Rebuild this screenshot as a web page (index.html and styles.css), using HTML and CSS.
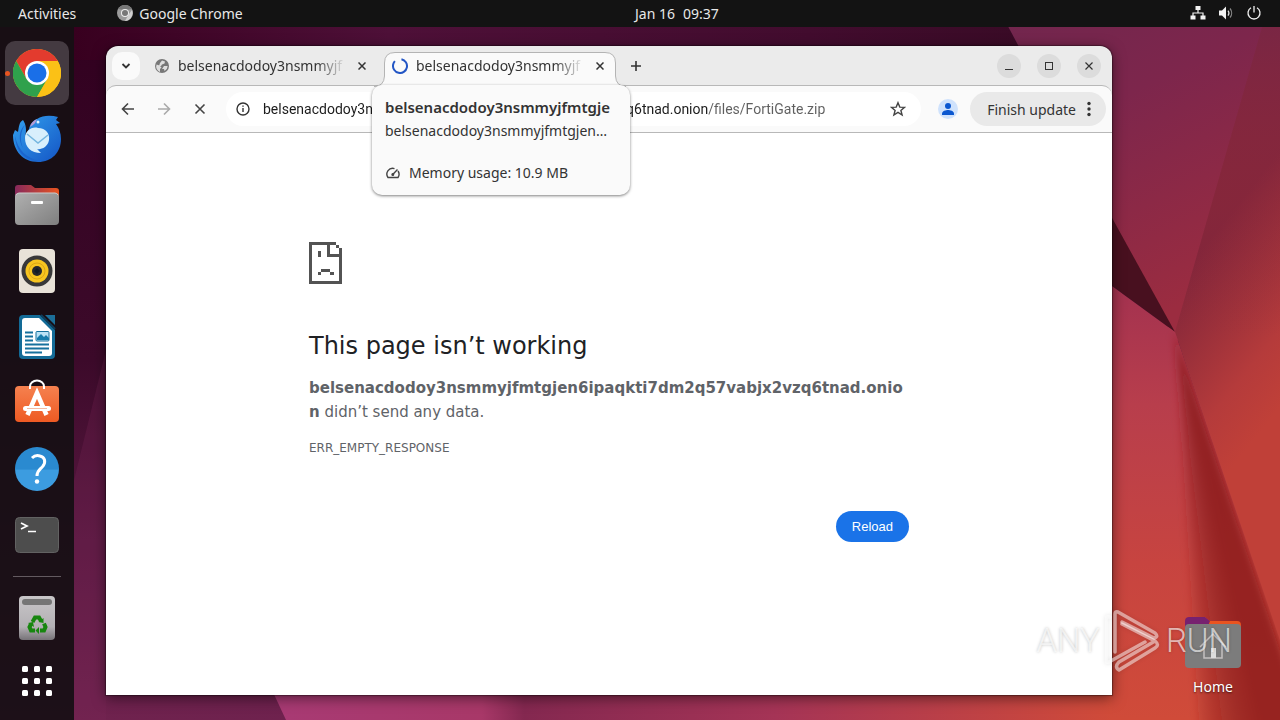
FILE: index.html
```html
<!DOCTYPE html>
<html lang="en">
<head>
<meta charset="utf-8">
<title>Desktop</title>
<link rel="stylesheet" href="styles.css">
</head>
<body>
<svg class="wallpaper" viewBox="0 0 1280 720" preserveAspectRatio="none" aria-hidden="true">
  <defs>
    <linearGradient id="left" x1="0" y1="0" x2="0" y2="1"><stop offset="0" stop-color="#31001f"/><stop offset=".5" stop-color="#3c0a2a"/><stop offset=".75" stop-color="#581840"/><stop offset="1" stop-color="#6f224e"/></linearGradient>
    <linearGradient id="top" x1="0" y1="0" x2="1" y2="0"><stop offset="0" stop-color="#38001f"/><stop offset=".3" stop-color="#4e1038"/><stop offset=".7" stop-color="#420c2e"/><stop offset="1" stop-color="#350a22"/></linearGradient>
    <linearGradient id="upper" x1="0" y1="0" x2=".4" y2="1"><stop offset="0" stop-color="#6f264e"/><stop offset=".4" stop-color="#7d264c"/><stop offset="1" stop-color="#9b2c40"/></linearGradient>
    <linearGradient id="east" gradientUnits="userSpaceOnUse" x1="1185" y1="270" x2="1310" y2="370"><stop offset="0" stop-color="#80253a"/><stop offset=".7" stop-color="#b53b3b"/><stop offset="1" stop-color="#c04038"/></linearGradient>
    <linearGradient id="fall" x1="0" y1="0" x2="0" y2="1"><stop offset="0" stop-color="#6f264e" stop-opacity=".6"/><stop offset=".6" stop-color="#9a2c3e" stop-opacity=".2"/><stop offset="1" stop-color="#9a2c3e" stop-opacity="0"/></linearGradient>
    <linearGradient id="south" x1="0" y1="0" x2="0" y2="1"><stop offset="0" stop-color="#a03050"/><stop offset=".3" stop-color="#b83e4c"/><stop offset=".65" stop-color="#c74440"/><stop offset="1" stop-color="#d04b39"/></linearGradient>
    <linearGradient id="floor" x1="0" y1="0" x2="1" y2="0"><stop offset="0" stop-color="#a83a74"/><stop offset=".25" stop-color="#a83868"/><stop offset=".3" stop-color="#842850"/><stop offset=".6" stop-color="#a53456"/><stop offset="1" stop-color="#d04b39"/></linearGradient>
    <filter id="soft" x="-20%" y="-5%" width="140%" height="110%"><feGaussianBlur stdDeviation="4"/></filter>
    <clipPath id="southclip"><path d="M1175 332L1090 270V720H1280V640z"/></clipPath>
  </defs>
  <rect width="1280" height="720" fill="url(#left)"/>
  <rect x="74" width="1050" height="60" fill="url(#top)"/>
  <path d="M74 480 L106 350 V720 H74z" fill="#7c2858" opacity=".25"/>
  <path d="M994 0H1280V340H1175z" fill="url(#upper)"/>
  <path d="M1270 0H1280V645L1175 332z" fill="url(#east)"/>
  <path d="M1270 0H1280V340L1175 332z" fill="url(#fall)"/>
  <path d="M1175 332L1100 196V277z" fill="#48101f"/>
  <path d="M1175 332L1090 270V720H1280V640z" fill="url(#south)"/>
  <g clip-path="url(#southclip)">
    <g fill="#8a1d1c" fill-opacity=".24" filter="url(#soft)">
      <path d="M1175 332L1200 740H1310V732z"/>
      <path d="M1175 332L1212 740H1310V732z"/>
      <path d="M1175 332L1224 740H1310V732z"/>
      <path d="M1175 332L1236 740H1310V732z"/>
      <path d="M1175 332L1248 740H1310V732z"/>
      <path d="M1175 332L1260 740H1310V732z"/>
    </g>
  </g>
  <path d="M272 690H1112V720H286z" fill="url(#floor)"/>
</svg>

<header class="topbar">
  <div class="topbar-left">
    <button class="top-item">Activities</button>
    <button class="top-item app-menu">
      <svg width="16" height="16" viewBox="0 0 16 16"><circle cx="8" cy="8" r="8" fill="#9b9b9b"/><path d="M1 4A8 8 0 0 1 15 4L8 5z" fill="#777"/><path d="M15 5a8 8 0 0 1-7 11l4-7z" fill="#d0d0d0"/><circle cx="8" cy="8" r="4" fill="#eee"/><circle cx="8" cy="8" r="3" fill="#777"/></svg>
      Google Chrome</button>
  </div>
  <button class="top-item clock"><span>Jan 16</span><span>09:37</span></button>
  <div class="status">
    <svg width="16" height="16" viewBox="0 0 16 16" fill="#f2f2f2"><path d="M5.500 1h5v4h-5zM.5 10.500h5v4h-5zM10.500 10.500h5v4h-5z"/><path d="M8 5v3M3 11V8h10v3" fill="none" stroke="#f2f2f2" stroke-width="1.200"/></svg>
    <svg width="16" height="16" viewBox="0 0 16 16"><path d="M1 5.500h3L8 1.500v13l-4-4H1z" fill="#f2f2f2"/><path d="M10 5.500a4 4 0 0 1 0 5" fill="none" stroke="#ddd" stroke-width="1.200"/><path d="M12 3.500a7 7 0 0 1 0 9" fill="none" stroke="#888" stroke-width="1.200"/></svg>
    <svg width="16" height="16" viewBox="0 0 16 16" fill="none" stroke="#f2f2f2" stroke-width="1.300"><path d="M8 1v6.500M5 2.800a6 6 0 1 0 6 0"/></svg>
  </div>
</header>

<div class="workspace">
  <nav class="dock" aria-label="Dock">
    <button class="dock-item running" aria-label="Google Chrome">
      <svg width="48" height="48" viewBox="0 0 48 48"><circle cx="24" cy="24" r="24" fill="#fbbc15"/><path d="M3.200 12A24 24 0 0 1 44.800 12H24L13.600 30z" fill="#e33b2e"/><path d="M3.200 12A24 24 0 0 0 24 48L34.400 30 13.600 30z" fill="#2fa14c"/><path d="M24 12H44.800A24 24 0 0 1 24 48L34.400 30z" fill="#fbc116"/><circle cx="24" cy="24" r="12" fill="#fff"/><circle cx="24" cy="24" r="9.500" fill="#1a6fe8"/></svg>
    </button>
    <button class="dock-item" aria-label="Thunderbird">
      <svg width="48" height="48" viewBox="0 0 48 48"><defs><linearGradient id="tb" x1="0" y1="0" x2="1" y2="1"><stop offset="0" stop-color="#33a2ef"/><stop offset="1" stop-color="#1454c4"/></linearGradient></defs><path d="M0 20C0 36 10 47 25 47C39 47 48 37 48 24C48 18 46 13 43 9L47 8L43 5L45 2C38 0 30 0 24 4C19 6 17 10 16 14L12 21C14 16 13 9 10 5C6 7 6 12 5 17L2 15z" fill="url(#tb)"/><path d="M2 21c3 14 11 22 25 25-16 0-24-10-25-25zM12 10c-5 7-5 16-2 23-5-8-4-18 2-23z" fill="#1b65cd"/><path d="M17 12c1-4 3-6 7-8-1 3-3 6-7 8z" fill="#b79bd3"/><circle cx="25" cy="7" r="1.500" fill="#dff3ff"/><path d="M12 23c0-7 7-12 13-10 8 0 12 6 11 12-1 7-8 10-12 9l4 4c-10 0-16-6-16-15z" fill="#d8effc"/><path d="M14 19l11 9 10-8" fill="none" stroke="#75b6df" stroke-width="1.500"/></svg>
    </button>
    <button class="dock-item" aria-label="Files">
      <svg width="48" height="48" viewBox="0 0 48 48"><defs><linearGradient id="ff" x1="0" x2="1"><stop offset="0" stop-color="#87295c"/><stop offset="1" stop-color="#e95420"/></linearGradient><linearGradient id="fg" x1="0" y1="0" x2="1" y2="1"><stop offset="0" stop-color="#b0b0b0"/><stop offset="1" stop-color="#7f7f7f"/></linearGradient></defs><path d="M2 12V7q0-3 3-3h13l4 3h21q3 0 3 3v6H2z" fill="url(#ff)"/><rect x="2" y="12" width="44" height="32" rx="4" fill="url(#fg)"/><path d="M3 14q1-2 3-2h36q2 0 3 2" stroke="#ccc" fill="none"/><rect x="18" y="20" width="12" height="3" rx="1" fill="#fff"/></svg>
    </button>
    <button class="dock-item" aria-label="Rhythmbox">
      <svg width="48" height="48" viewBox="0 0 48 48"><rect x="6" y="2" width="36" height="44" rx="4" fill="#e8e2d8"/><circle cx="24" cy="24" r="15.500" fill="#383839"/><circle cx="24" cy="24" r="11.500" fill="#f7c51f"/><circle cx="24" cy="24" r="8" fill="none" stroke="#dba717" stroke-width="1"/><circle cx="24" cy="24" r="5" fill="#26282b"/><path d="M21 24l3-3 3 3-3 3z" fill="#111a26"/></svg>
    </button>
    <button class="dock-item" aria-label="LibreOffice Writer">
      <svg width="48" height="48" viewBox="0 0 48 48"><path d="M6 6q0-4 4-4h17l15 15v25q0 4-4 4H10q-4 0-4-4z" fill="#136b97"/><path d="M9 8q0-3 3-3h14l13 13v22q0 3-3 3H12q-3 0-3-3z" fill="#fff"/><path d="M32 2h10v10z" fill="#1c6e98"/><path d="M28 2l14 14" stroke="#0c3e5c" stroke-width="2"/><path d="M12 19.500h8M12 23.500h8M12 27.500h8M12 31.500h24M12 35.500h24M12 39.500h17" stroke="#16719d" stroke-width="2"/><rect x="23" y="18.500" width="13" height="9.500" rx="1" fill="#b9e2f6" stroke="#16719d"/><path d="M24 27v-2l4-4 3 3 2-2 3 3v2z" fill="#167cac"/></svg>
    </button>
    <button class="dock-item" aria-label="Ubuntu Software">
      <svg width="48" height="48" viewBox="0 0 48 48"><defs><linearGradient id="us" x1="0" y1="0" x2="0" y2="1"><stop offset="0" stop-color="#f5814f"/><stop offset="1" stop-color="#ee5a23"/></linearGradient></defs><rect x="2" y="7" width="44" height="36" rx="4" fill="url(#us)"/><path d="M17 10V7.500a7 6 0 0 1 14 0V10" fill="none" stroke="#fff" stroke-width="2"/><path d="M14.500 36L24 14l9.500 22" fill="none" stroke="#fff" stroke-width="4.500"/><rect x="10" y="27" width="28" height="5" rx="2.500" fill="#fff"/><path d="M14 29.500h20" stroke="#f2a98a" stroke-width=".8"/></svg>
    </button>
    <button class="dock-item" aria-label="Help">
      <svg width="48" height="48" viewBox="0 0 48 48"><defs><linearGradient id="hp" x1="0" y1="0" x2="0" y2="1"><stop offset=".5" stop-color="#2a8ad0"/><stop offset=".53" stop-color="#3c9ce0"/></linearGradient></defs><circle cx="24" cy="24" r="22" fill="url(#hp)"/><path d="M19 13c2-2 5-3 8-2 5 1 6 6 3 10-2 3-6 4-6 10" fill="none" stroke="#fff" stroke-width="3"/><circle cx="24" cy="36.500" r="2.200" fill="#fff"/></svg>
    </button>
    <button class="dock-item" aria-label="Terminal">
      <svg width="48" height="48" viewBox="0 0 48 48"><rect x="2.500" y="6.500" width="43" height="35" rx="4" fill="#4d4d4d" stroke="#626262"/><path d="M8 12l6 3-6 3M15 20.500h8" fill="none" stroke="#fff" stroke-width="1.700"/></svg>
    </button>
    <hr class="dock-rule">
    <button class="dock-item" aria-label="Trash">
      <svg width="48" height="48" viewBox="0 0 48 48"><defs><linearGradient id="tr" x1="0" y1="0" x2="0" y2="1"><stop offset="0" stop-color="#c8c6c8"/><stop offset=".7" stop-color="#b3b0b4"/><stop offset="1" stop-color="#777378"/></linearGradient></defs><rect x="6" y="2" width="36" height="44" rx="4" fill="url(#tr)"/><rect x="9" y="5" width="30" height="6" rx="3" fill="#757575"/><g fill="none" stroke="#17860f" stroke-width="4"><path d="M19.500 28l2.500-4.500h4l2 3.500"/><path d="M31 29.500l1.500 3.500-1.500 3.500h-4" /><path d="M22 36.500h-4l-1.500-3.500 1.500-3"/></g><path d="M30.500 29l-5-1 5-4zM26 33v7l-3.500-3.500zM15 29l5-1 1 5z" fill="#17860f"/></svg>
    </button>
    <button class="dock-item apps" aria-label="Show Applications">
      <svg width="30" height="30" viewBox="0 0 30 30" fill="#fff"><rect width="6" height="6" rx="1.500"/><rect x="12" width="6" height="6" rx="1.500"/><rect x="24" width="6" height="6" rx="1.500"/><rect y="12" width="6" height="6" rx="1.500"/><rect x="12" y="12" width="6" height="6" rx="1.500"/><rect x="24" y="12" width="6" height="6" rx="1.500"/><rect y="24" width="6" height="6" rx="1.500"/><rect x="12" y="24" width="6" height="6" rx="1.500"/><rect x="24" y="24" width="6" height="6" rx="1.500"/></svg>
    </button>
  </nav>

  <main class="desktop">
    <a class="home" href="#home">
      <svg width="56" height="52" viewBox="0 0 56 52"><path d="M0 12V5q0-4 4-4h16l5 4H52q4 0 4 4v6H0z" fill="#e95420"/><path d="M0 12V5q0-4 4-4h16l5 4-2 5z" fill="#77216f"/><rect y="8" width="56" height="44" rx="4" fill="#7c7c7c"/><path d="M15 31L28 18l13 13M19 28v14h18V28" fill="none" stroke="#c4c0c0" stroke-width="1.500"/><rect x="26" y="32" width="5" height="10" fill="#ddd"/></svg>
      Home
    </a>

    <section class="window" aria-label="Google Chrome">
      <div class="tabstrip">
        <button class="tab-search" aria-label="Search tabs"><svg width="10" height="10" viewBox="0 0 10 10"><path d="M1.500 3L5 6.500 8.500 3" fill="none" stroke="#333" stroke-width="1.800"/></svg></button>
        <div class="tab">
          <svg width="16" height="16" viewBox="0 0 16 16"><circle cx="8" cy="8" r="7" fill="#777"/><path d="M2.500 6.500l3 1 2 2-1.500 1.500v3A6 6 0 0 1 2.500 6.500zM8 2.500l3 1-.5 2L8 6.500 7 8H5l1-3zM10 8h3.700a6 6 0 0 1-3.200 5l-.5-2H8z" fill="#ddd"/></svg>
          <span class="tab-title">belsenacdodoy3nsmmyjf</span>
          <button class="tab-close" aria-label="Close tab"><svg width="8" height="8" viewBox="0 0 8 8"><path d="M.5 .5l7 7M7.500 .5l-7 7" stroke="#333" stroke-width="1.500"/></svg></button>
        </div>
        <div class="tab active">
          <svg class="tab-shape" width="252" height="35" viewBox="0 0 252 35"><path d="M0 34.500Q10 34.500 10.500 24V11Q10.500 .5 21 .5H231Q241.500 .5 241.500 11V24Q242 34.500 252 34.500V35H0z" fill="#fafafa"/><path d="M0 34.500Q10 34.500 10.500 24V11Q10.500 .5 21 .5H231Q241.500 .5 241.500 11V24Q242 34.500 252 34.500" fill="none" stroke="#b4b4b4"/></svg>
          <svg width="16" height="16" viewBox="0 0 16 16"><path d="M8 1A7 7 0 1 1 1 8q0-2 1-3.700" transform="rotate(12 8 8)" fill="none" stroke="#2356c5" stroke-width="2"/></svg>
          <span class="tab-title">belsenacdodoy3nsmmyjf</span>
          <button class="tab-close" aria-label="Close tab"><svg width="8" height="8" viewBox="0 0 8 8"><path d="M.5 .5l7 7M7.500 .5l-7 7" stroke="#333" stroke-width="1.500"/></svg></button>
          <aside class="hovercard">
            <strong class="card-title">belsenacdodoy3nsmmyjfmtgje</strong>
            <span class="card-host">belsenacdodoy3nsmmyjfmtgjen…</span>
            <span class="card-memory"><svg width="16" height="16" viewBox="0 0 16 16" fill="none" stroke="#444" stroke-width="1.400"><path d="M9.500 3.600A5.800 5.800 0 0 0 3 12.500H13A5.800 5.800 0 0 0 13 6M7.500 9.700L12.500 4.500"/><circle cx="7.800" cy="9.500" r=".8" fill="#444"/></svg>Memory usage: 10.9 MB</span>
          </aside>
        </div>
        <button class="new-tab" aria-label="New tab"><svg width="12" height="12" viewBox="0 0 12 12"><path d="M6 1v10M1 6h10" stroke="#333" stroke-width="1.600"/></svg></button>
        <div class="window-controls">
          <button aria-label="Minimize"><svg width="10" height="10" viewBox="0 0 10 10"><path d="M1 8.500h8" stroke="#333"/></svg></button>
          <button aria-label="Maximize"><svg width="10" height="10" viewBox="0 0 10 10"><rect x="1.500" y="1.500" width="7" height="7" fill="none" stroke="#333"/></svg></button>
          <button aria-label="Close"><svg width="10" height="10" viewBox="0 0 10 10"><path d="M1.500 1.500l7 7M8.500 1.500l-7 7" stroke="#333" stroke-width="1.200"/></svg></button>
        </div>
      </div>

      <div class="toolbar">
        <button class="tool" aria-label="Back"><svg width="16" height="16" viewBox="0 0 16 16" fill="none" stroke="#444" stroke-width="1.600"><path d="M14 8H3M8 2.500L2.500 8 8 13.500"/></svg></button>
        <button class="tool" aria-label="Forward" disabled><svg width="16" height="16" viewBox="0 0 16 16" fill="none" stroke="#aaa" stroke-width="1.600"><path d="M2 8h11M8 2.500L13.500 8 8 13.500"/></svg></button>
        <button class="tool" aria-label="Stop"><svg width="16" height="16" viewBox="0 0 16 16" fill="none" stroke="#444" stroke-width="1.600"><path d="M3.500 3.500l9 9M12.500 3.500l-9 9"/></svg></button>
        <div class="omnibox">
          <svg width="16" height="16" viewBox="0 0 16 16" fill="none" stroke="#333" stroke-width="1.400"><circle cx="8" cy="8" r="6"/><path d="M8 7v4M8 4.500v1.300"/></svg>
          <input class="url" type="text" aria-label="Address" value="belsenacdodoy3nsmmyjfmtgjen6ipaqkti7dm2q57vabjx2vzq6tnad.onion/files/FortiGate.zip">
          <button class="star" aria-label="Bookmark this tab"><svg width="16" height="16" viewBox="0 0 16 16"><path d="M8 1.700l1.800 4.400 4.700.3-3.600 3 1.200 4.600L8 11.400 3.900 14l1.200-4.600-3.600-3 4.700-.3z" fill="none" stroke="#444" stroke-width="1.400"/></svg></button>
        </div>
        <button class="profile" aria-label="Profile"><svg width="20" height="20" viewBox="0 0 20 20"><circle cx="10" cy="10" r="10" fill="#cfe2fc"/><circle cx="10" cy="7" r="3" fill="#0b57d0"/><path d="M4 16v-1.500c0-2.500 4-3.500 6-3.500s6 1 6 3.500V16z" fill="#0b57d0"/></svg></button>
        <button class="update">Finish update<svg width="4" height="16" viewBox="0 0 4 16" fill="#333"><circle cx="2" cy="2.500" r="1.700"/><circle cx="2" cy="8" r="1.700"/><circle cx="2" cy="13.500" r="1.700"/></svg></button>
      </div>

      <article class="page">
        <div class="error">
          <svg width="33" height="42" viewBox="0 0 33 42" fill="#535353" shape-rendering="crispEdges"><path d="M0 0h27v3H3v36h27V15H18V3h3v9h9V6h3v36H0zM27 3h3v3h-3zM9 9h3v6H9zM12 27h9v3h-9zM9 30h3v3H9zM21 30h4v3h-4z"/></svg>
          <h1>This page isn’t working</h1>
          <p class="message"><strong>belsenacdodoy3nsmmyjfmtgjen6ipaqkti7dm2q57vabjx2vzq6tnad.onion</strong> didn’t send any data.</p>
          <p class="code">ERR_EMPTY_RESPONSE</p>
          <button class="reload">Reload</button>
        </div>
      </article>
    </section>

    <div class="watermark">
      <span>ANY</span>
      <svg width="56" height="62" viewBox="0 0 56 62" fill="none" stroke="#fff" stroke-opacity=".5" stroke-width="3.500" stroke-linejoin="round" stroke-linecap="round"><path d="M5 7Q1 6 1 10V50Q1 53 4 52L40 32"/><path d="M10 42V4Q10 1 13 2L50 23Q54 27 49 28L17 12"/><path d="M50 31L14 52Q9 57 14 60L50 38Q55 35 50 31L17 14"/></svg>
      <span>RUN</span>
    </div>
  </main>
</div>
</body>
</html>
```
FILE: styles.css
```css
* { box-sizing: border-box; }

body {
  margin: 0;
  height: 100vh;
  display: flex;
  flex-direction: column;
  overflow: hidden;
  background: #31001f;
  color: #333;
  font-family: "Noto Sans", "Open Sans", sans-serif;
  font-size: 14px;
}

button {
  margin: 0;
  padding: 0;
  border: 0;
  background: none;
  color: inherit;
  font: inherit;
  display: flex;
  align-items: center;
  justify-content: center;
}

svg { display: block; flex: none; }

.wallpaper {
  position: absolute;
  inset: 0;
  width: 100%;
  height: 100%;
  z-index: -1;
}

/* Top bar */
.topbar {
  display: grid;
  grid-template-columns: calc(50% - 5px) auto 1fr;
  align-items: center;
  height: 27px;
  padding-bottom: 1px;
  background: #131313;
  color: #e8e8e8;
}
.topbar-left { display: flex; gap: 41px; padding-left: 18px; }
.app-menu { gap: 6px; }
.clock { gap: 8px; }
.status { display: flex; justify-content: flex-end; gap: 12px; padding-right: 18px; }

/* Dock */
.workspace { flex: 1; display: flex; min-height: 0; }
.dock {
  flex: none;
  width: 74px;
  padding-top: 14px;
  display: flex;
  flex-direction: column;
  align-items: center;
  gap: 2px;
  background: rgba(22, 15, 20, 0.92);
}
.dock-item { flex: none; position: relative; width: 64px; height: 64px; border-radius: 10px; }
.dock-item.running { background: #443a41; }
.dock-item.running::before {
  content: "";
  position: absolute;
  left: 0;
  width: 5px;
  height: 5px;
  border-radius: 50%;
  background: #e95420;
}
.dock-item.apps { height: 58px; }
.dock-rule { width: 48px; height: 1px; margin: 7px 0; border: 0; background: #635a60; }

/* Desktop */
.desktop { flex: 1; position: relative; }
.home {
  position: absolute;
  right: 39px;
  bottom: 23px;
  display: flex;
  flex-direction: column;
  align-items: center;
  gap: 9px;
  color: #fff;
  line-height: 20px;
  text-decoration: none;
  text-shadow: 0 1px 2px rgba(0, 0, 0, 0.6);
}
.watermark {
  position: absolute;
  right: 48px;
  bottom: 48px;
  display: flex;
  align-items: center;
  gap: 5px;
  color: rgba(255, 255, 255, 0.65);
  font-family: Roboto, sans-serif;
  font-size: 33px;
  font-weight: 300;
  line-height: 40px;
  text-shadow: 0 0 3px rgba(0, 0, 0, 0.25);
  pointer-events: none;
}
.watermark svg { filter: drop-shadow(0 0 2px rgba(0, 0, 0, 0.2)); }

/* Browser window */
.window {
  position: absolute;
  inset: 19px 168px 25px 32px;
  display: flex;
  flex-direction: column;
  background: #ebebeb;
  border-radius: 12px 12px 0 0;
  box-shadow: 0 0 1px 1px rgba(0, 0, 0, 0.35), 0 3px 14px rgba(0, 0, 0, 0.5);
}
.tabstrip { display: flex; align-items: center; height: 39px; padding: 1px 11px 0 6px; }
.tab-search { width: 28px; height: 28px; border-radius: 10px; background: #fafafa; }
.tab {
  position: relative;
  display: flex;
  align-items: center;
  gap: 8px;
  width: 232px;
  height: 28px;
  margin-left: 6px;
  padding: 0 8px;
}
.tab.active { z-index: 2; }
.tab > svg, .tab > span, .tab > button { position: relative; }
.tab .tab-shape { position: absolute; left: -10px; top: 0; }
.tab-title {
  flex: 1;
  min-width: 0;
  overflow: hidden;
  white-space: nowrap;
  line-height: 20px;
  mask-image: linear-gradient(90deg, #000 82%, transparent);
}
.tab-close { width: 16px; height: 16px; }
.new-tab { width: 28px; height: 28px; margin-left: 6px; }
.window-controls { display: flex; gap: 16px; margin-left: auto; }
.window-controls button { width: 24px; height: 24px; border-radius: 50%; background: #dcdcdc; }

/* Tab hover card */
.hovercard {
  position: absolute;
  left: -12px;
  top: 33px;
  width: 258px;
  height: 110px;
  padding: 10px 13px 13px;
  display: flex;
  flex-direction: column;
  background: #fafafa;
  border-radius: 10px;
  box-shadow: 0 1px 3px rgba(0, 0, 0, 0.5);
  white-space: nowrap;
}
.card-title { font-size: 15px; font-weight: 600; line-height: 24px; }
.card-host { line-height: 24px; }
.card-memory { display: flex; align-items: center; gap: 8px; margin-top: auto; line-height: 18px; }

/* Toolbar */
.toolbar {
  display: flex;
  align-items: center;
  gap: 8px;
  height: 48px;
  padding: 0 6px 0 8px;
  background: #fafafa;
  border: solid #b8b8b8;
  border-width: 1px 0;
  border-radius: 10px 10px 0 0;
}
.tool { width: 28px; height: 28px; }
.omnibox {
  flex: 1;
  display: flex;
  align-items: center;
  gap: 12px;
  height: 34px;
  margin-left: 4px;
  padding: 0 15px 0 9px;
  border-radius: 17px;
  background: #fff;
}
.url {
  flex: 1;
  min-width: 0;
  padding: 0;
  border: 0;
  outline: 0;
  font-family: Roboto, sans-serif;
  font-size: 14px;
  color: transparent;
  background: linear-gradient(90deg, #1c1c1c 445px, #5f5f5f 445px);
  background-clip: text;
}
.profile { width: 20px; height: 20px; margin: 0 4px 0 9px; }
.update { gap: 11px; height: 34px; padding: 0 15px 0 17px; border-radius: 17px; background: #e9e9e9; }

/* Error page */
.page { flex: 1; min-height: 0; background: #fff; color: #5f6368; font-family: "DejaVu Sans", sans-serif; }
.error { display: flex; flex-direction: column; align-items: flex-start; max-width: 600px; margin: 0 auto; padding-top: 109px; }
.error h1 { margin: 48px 0 15px; color: #202124; font-size: 24px; font-weight: 400; line-height: 29px; }
.message { width: 100%; margin: 0; font-size: 15px; line-height: 24px; overflow-wrap: anywhere; }
.code { margin: 14px 0 0; font-size: 12px; line-height: 20px; }
.reload {
  align-self: flex-end;
  margin-top: 53px;
  padding: 8px 16px;
  border-radius: 16px;
  background: #1a73e8;
  color: #fff;
  font-family: "Liberation Sans", sans-serif;
  font-size: 13px;
  line-height: 15px;
}
```
